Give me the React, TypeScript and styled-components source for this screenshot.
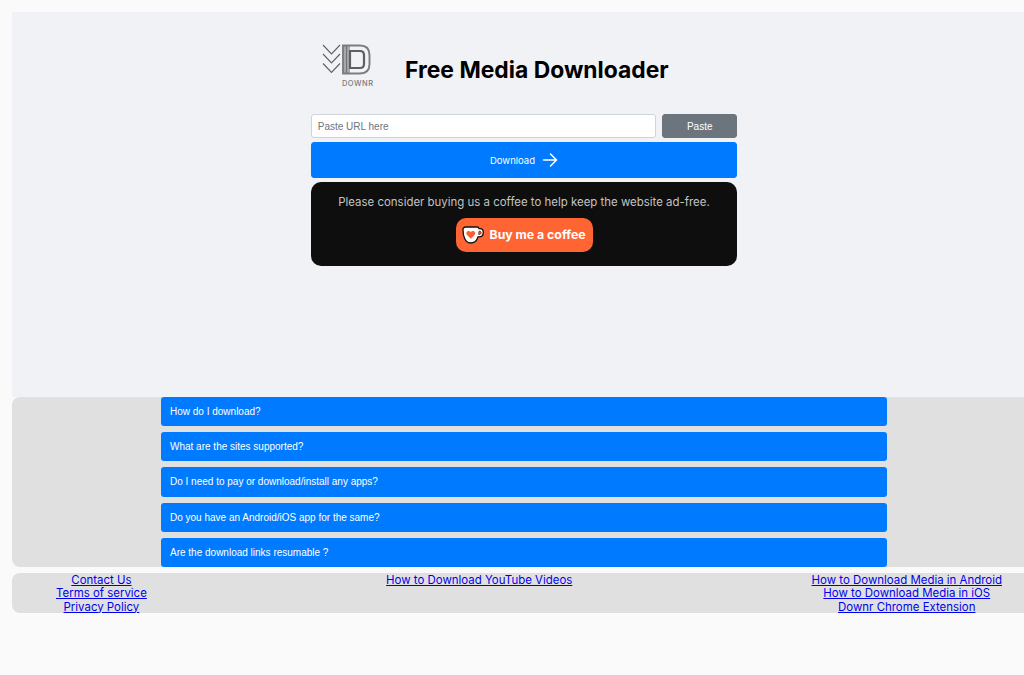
import React from "react"
import styled, { createGlobalStyle } from "styled-components"

const GlobalStyle = createGlobalStyle`
  html, body {
    margin: 0;
    padding: 0;
    overflow: hidden;
    background: #fafafa;
  }
  body {
    font-family: Inter, "Liberation Sans", sans-serif;
    height: 675px;
  }
`

const faqs = [
  "How do I download?",
  "What are the sites supported?",
  "Do I need to pay or download/install any apps?",
  "Do you have an Android/iOS app for the same?",
  "Are the download links resumable ?",
]

const Logo = () => (
  <svg width="52" height="46" viewBox="0 0 52 46" fill="none">
    <g stroke="#5c6066" strokeWidth="1.100">
      <path d="M1 1 9.500 10 18 1" />
      <path d="M1 10 9.500 19 18 10" />
      <path d="M1 19.500 9.500 28.500 18 19.500" />
    </g>
    <path d="M21 1.500H28V29.500H21Z" fill="#a6a8ab" />
    <path d="M21 1.500H38C44 1.500 47.500 5 47.500 11V20C47.500 26 44 29.500 38 29.500H21Z" stroke="#7a7d81" strokeWidth="1.900" />
    <path d="M24.500 2V29" stroke="#6f7277" strokeWidth="1.100" />
    <path d="M28 7H38C40.500 7 42 8.500 42 11V20C42 22.500 40.500 24 38 24H28Z" stroke="#5c6065" strokeWidth="2.200" />
    <text x="20" y="42" textLength="31" fontFamily="Inter, sans-serif" fontSize="7.500" fontWeight="500" fill="#777b80">DOWNR</text>
  </svg>
)

const ArrowIcon = () => (
  <svg width="16" height="16" viewBox="0 0 16 16" fill="none" stroke="#fff" strokeWidth="1.500" strokeLinecap="round" strokeLinejoin="round">
    <path d="M1.500 8H14M8.500 2 14.500 8 8.500 14" />
  </svg>
)

const CupIcon = () => (
  <svg width="22" height="18" viewBox="0 0 22 18">
    <path d="M1 3.500C1 2 2 1 3.500 1H15C16 1 16.800 1.700 17 2.700H18C20 2.700 21.300 4.300 21.300 6.500 21.300 9.300 19.500 10.800 17 10.800H16C15 14.500 12.500 17 8.500 17 3.500 17 1 11 1 3.500Z" fill="#fff" stroke="#111" strokeWidth="1.300" />
    <path d="M17 5.200H18C18.800 5.200 19.200 5.800 19.200 6.700 19.200 7.800 18.400 8.500 17 8.500H16.600Z" fill="#ff6433" stroke="#111" strokeWidth="0.600" />
    <path d="M8.800 12.800 5 9C3.600 7.300 4.800 5 6.600 5 7.600 5 8.300 5.500 8.800 6.300 9.300 5.500 10 5 11 5 12.800 5 14 7.300 12.600 9Z" fill="#ff5f2e" />
  </svg>
)

export default function App() {
  return (
    <>
      <GlobalStyle />
      <Page>
        <Main>
          <Header>
            <Logo />
            <Title>Free Media Downloader</Title>
          </Header>
          <Form>
            <UrlRow>
              <UrlInput placeholder="Paste URL here" />
              <PasteButton>Paste</PasteButton>
            </UrlRow>
            <DownloadButton>
              Download
              <ArrowIcon />
            </DownloadButton>
            <CoffeeCard>
              <CoffeeText>Please consider buying us a coffee to help keep the website ad-free.</CoffeeText>
              <CoffeeButton>
                <CupIcon />
                Buy me a coffee
              </CoffeeButton>
            </CoffeeCard>
          </Form>
        </Main>
        <FaqPanel>
          <FaqList>
            {faqs.map(q => (
              <FaqItem key={q}>{q}</FaqItem>
            ))}
          </FaqList>
        </FaqPanel>
        <Footer>
          <FooterCol>
            <FooterLink href="#">Contact Us</FooterLink>
            <FooterLink href="#">Terms of service</FooterLink>
            <FooterLink href="#">Privacy Policy</FooterLink>
          </FooterCol>
          <FooterCol>
            <FooterLink href="#">How to Download YouTube Videos</FooterLink>
          </FooterCol>
          <FooterCol>
            <FooterLink href="#">How to Download Media in Android</FooterLink>
            <FooterLink href="#">How to Download Media in iOS</FooterLink>
            <FooterLink href="#">Downr Chrome Extension</FooterLink>
          </FooterCol>
        </Footer>
      </Page>
    </>
  )
}

const Page = styled.div`
  width: 1024px;
  margin-left: 12px;
  padding-top: 12px;
`

const Main = styled.main`
  height: 385px;
  background: #f1f2f6;
  display: flex;
  flex-direction: column;
  align-items: center;
  padding-top: 32px;
  box-sizing: border-box;
`

const Header = styled.header`
  width: 426px;
  display: flex;
  align-items: flex-start;
  gap: 31px;
  padding-left: 11px;
  box-sizing: border-box;
  height: 70px;
`

const Title = styled.h1`
  margin: 11.500px 0 0;
  font-size: 22.880px;
  line-height: 29px;
  font-weight: 700;
  color: #000;
  white-space: nowrap;
`

const Form = styled.div`
  width: 426.500px;
  display: flex;
  flex-direction: column;
  gap: 4px;
`

const UrlRow = styled.div`
  display: flex;
  gap: 6px;
`

const UrlInput = styled.input`
  flex: 1;
  min-width: 0;
  height: 24.400px;
  box-sizing: border-box;
  padding: 0 6px;
  border: 1px solid #ced4da;
  border-radius: 3px;
  background: #fff;
  font-family: "Liberation Sans", sans-serif;
  font-size: 10px;
  outline: none;

  &::placeholder {
    color: #6c757d;
    opacity: 1;
  }
`

const PasteButton = styled.button`
  width: 75px;
  height: 24.400px;
  border: 1px solid #6c757d;
  border-radius: 3px;
  background: #6c757d;
  color: #fff;
  font-family: "Liberation Sans", sans-serif;
  font-size: 10px;
  padding: 0;
`

const DownloadButton = styled.button`
  height: 36px;
  display: flex;
  align-items: center;
  justify-content: center;
  gap: 7px;
  border: 1px solid #007bff;
  border-radius: 3px;
  background: #007bff;
  color: #fff;
  font-family: Inter, sans-serif;
  font-size: 9.500px;
  padding: 0;
`

const CoffeeCard = styled.div`
  height: 83.500px;
  box-sizing: border-box;
  background: #0e0e0e;
  border-radius: 10px;
  display: flex;
  flex-direction: column;
  align-items: center;
  padding-top: 11.500px;
`

const CoffeeText = styled.p`
  margin: 0 0 8px;
  font-size: 11.440px;
  line-height: 16px;
  color: #c4c4c4;
  white-space: nowrap;
`

const CoffeeButton = styled.a`
  width: 137px;
  height: 34px;
  box-sizing: border-box;
  display: flex;
  align-items: center;
  gap: 5.500px;
  padding-left: 6.500px;
  background: #ff6433;
  border-radius: 10px;
  color: #fff;
  font-family: Inter, sans-serif;
  font-size: 12.300px;
  font-weight: 700;
  white-space: nowrap;
`

const FaqPanel = styled.section`
  height: 170px;
  background: #e0e0e0;
  border-radius: 8px 0 0 8px;
  display: flex;
  justify-content: center;
`

const FaqList = styled.div`
  width: 726px;
  display: flex;
  flex-direction: column;
  gap: 6px;
`

const FaqItem = styled.div`
  height: 29.200px;
  display: flex;
  align-items: center;
  box-sizing: border-box;
  padding-left: 9px;
  background: #007bff;
  border-radius: 3px;
  color: #fff;
  font-family: "Liberation Sans", sans-serif;
  font-size: 10px;
`

const Footer = styled.footer`
  margin-top: 6px;
  height: 40px;
  box-sizing: border-box;
  padding: 0.600px 34px 0 44px;
  background: #e0e0e0;
  border-radius: 8px 0 0 8px;
  display: flex;
  justify-content: space-between;
  align-items: flex-start;
`

const FooterCol = styled.div`
  display: flex;
  flex-direction: column;
  align-items: center;
`

const FooterLink = styled.a`
  font-family: Inter, sans-serif;
  font-size: 11.440px;
  line-height: 13.500px;
  color: #0000ee;
  text-decoration: underline;
  white-space: nowrap;
`
